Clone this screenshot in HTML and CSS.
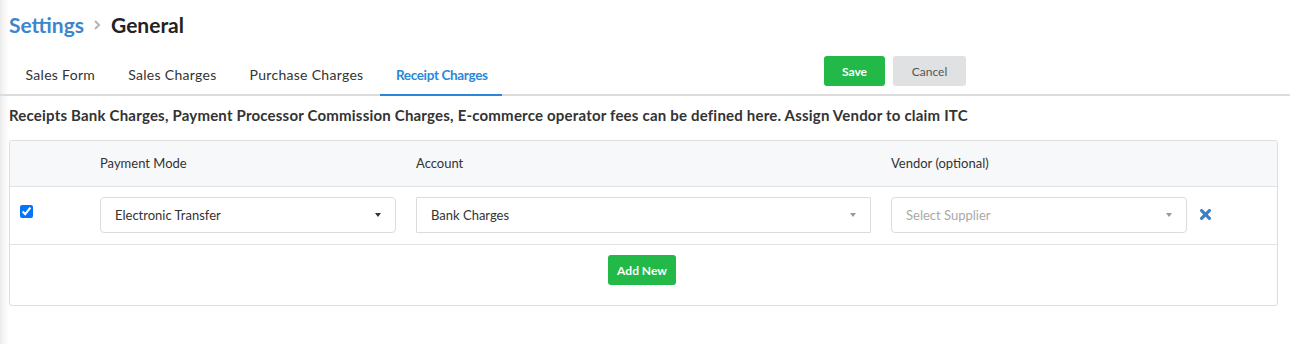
FILE: index.html
```html
<!DOCTYPE html>
<html lang="en">
<head>
<meta charset="utf-8">
<title>Settings - General</title>
<link rel="stylesheet" href="styles.css">
</head>
<body>
<div class="page">
  <div class="breadcrumb">
    <a class="crumb-link" href="#">Settings</a>
    <svg class="crumb-sep" width="8" height="12" viewBox="0 0 8 12"><path d="M2 2 L6 6 L2 10" fill="none" stroke="#b5b5b5" stroke-width="2"/></svg>
    <span class="crumb-current">General</span>
  </div>

  <div class="tabbar">
    <nav class="tabs">
      <a class="tab" href="#">Sales Form</a>
      <a class="tab" href="#">Sales Charges</a>
      <a class="tab" href="#">Purchase Charges</a>
      <a class="tab active" href="#">Receipt Charges</a>
    </nav>
    <div class="actions">
      <button class="btn btn-save">Save</button>
      <button class="btn btn-cancel">Cancel</button>
    </div>
  </div>

  <p class="desc">Receipts Bank Charges, Payment Processor Commission Charges, E-commerce operator fees can be defined here. Assign Vendor to claim ITC</p>

  <div class="table">
    <div class="row head">
      <div class="cell"></div>
      <div class="cell">Payment Mode</div>
      <div class="cell">Account</div>
      <div class="cell">Vendor (optional)</div>
      <div class="cell"></div>
    </div>
    <div class="row body">
      <div class="cell"><input class="check" type="checkbox" checked></div>
      <div class="cell"><div class="select r4"><span>Electronic Transfer</span><i class="caret dark"></i></div></div>
      <div class="cell"><div class="select r1"><span>Bank Charges</span><i class="caret"></i></div></div>
      <div class="cell"><div class="select r4"><span class="ph">Select Supplier</span><i class="caret"></i></div></div>
      <div class="cell icon-cell">
        <svg class="remove" width="11" height="11" viewBox="0 0 11 11"><path d="M1.6 1.6 L9.4 9.4 M9.4 1.6 L1.6 9.4" stroke="#3b7fc4" stroke-width="3.2" stroke-linecap="round"/></svg>
      </div>
    </div>
    <div class="foot">
      <button class="btn btn-add">Add New</button>
    </div>
  </div>
</div>
</body>
</html>
```

FILE: styles.css
```css
* { box-sizing: border-box; }
html, body { margin: 0; padding: 0; }
body {
  font-family: Lato, "Liberation Sans", sans-serif;
  color: #333;
  background: linear-gradient(to right, #ebebeb 0, #f7f7f7 4px, #fff 9px);
  min-height: 344px;
}
.page { width: 1290px; }

.breadcrumb {
  display: flex;
  align-items: center;
  margin-top: 12px;
  padding-left: 9px;
  height: 26px;
  font-size: 21px;
  line-height: 26px;
  font-weight: 700;
}
.crumb-link { color: #3d87c9; text-decoration: none; }
.crumb-sep { margin: 0 10px 0 9px; }
.crumb-current { color: #222; }

.tabbar {
  display: flex;
  align-items: flex-start;
  margin-top: 12px;
  border-bottom: 2px solid #dcdcdc;
  padding-left: 9px;
}
.tabs { display: flex; }
.tab {
  display: block;
  padding: 15px 16.5px 9px;
  font-size: 14px;
  line-height: 20px;
  letter-spacing: 0.3px;
  color: #333;
  text-decoration: none;
  border-bottom: 2px solid transparent;
  margin-bottom: -2px;
}
.tab.active {
  color: #2b88d9;
  font-weight: 700;
  font-size: 13.5px;
  letter-spacing: -0.35px;
  border-bottom-color: #2b88d9;
  padding-left: 16px;
  padding-right: 14px;
}
.actions {
  display: flex;
  gap: 8px;
  margin-left: auto;
  margin-right: 324px;
  margin-top: 6px;
}
.btn {
  height: 30px;
  border: 0;
  border-radius: 3px;
  font-family: Lato, "Liberation Sans", sans-serif;
  font-size: 12px;
  cursor: pointer;
}
.btn-save { width: 61px; background: #22b948; color: #fff; font-weight: 700; }
.btn-cancel { width: 73px; background: #e0e1e2; color: #555; }

.desc {
  margin: 9px 0 0;
  padding-left: 9px;
  font-size: 15px;
  line-height: 21px;
  letter-spacing: 0.2px;
  font-weight: 700;
  color: #333;
}

.table {
  margin: 14px 0 0 9px;
  width: 1269px;
  border: 1px solid #dedede;
  border-radius: 3px;
  background: #fff;
  font-size: 13px;
}
.row {
  display: grid;
  grid-template-columns: 60px 296px 455px 296px 1fr;
  column-gap: 20px;
  padding-left: 10px;
  border-bottom: 1px solid #e2e2e2;
}
.row.head {
  background: #f7f8fa;
  padding-top: 13px;
  padding-bottom: 14px;
  line-height: 18px;
  border-radius: 3px 3px 0 0;
}
.row.body { padding-top: 10px; padding-bottom: 11px; }
.check {
  width: 13px;
  height: 13px;
  margin: 8px 0 0;
  display: block;
}
.select {
  height: 36px;
  border: 1px solid #dcdcdc;
  display: flex;
  align-items: center;
  justify-content: space-between;
  padding: 0 14px 0 14px;
  color: #333;
  background: #fff;
}
.r4 { border-radius: 4px; }
.r1 { border-radius: 1px; }
.ph { color: #a9a9a9; }
.caret {
  width: 0; height: 0;
  border-left: 3.5px solid transparent;
  border-right: 3.5px solid transparent;
  border-top: 4px solid #999;
}
.caret.dark { border-top-color: #333; }
.icon-cell { display: flex; align-items: center; margin-left: -7px; padding-bottom: 2px; }
.remove { display: block; }

.foot {
  display: flex;
  justify-content: center;
  padding: 10px 3px 20px 0;
}
.btn-add { width: 68px; background: #22b948; color: #fff; font-weight: 700; }
```
